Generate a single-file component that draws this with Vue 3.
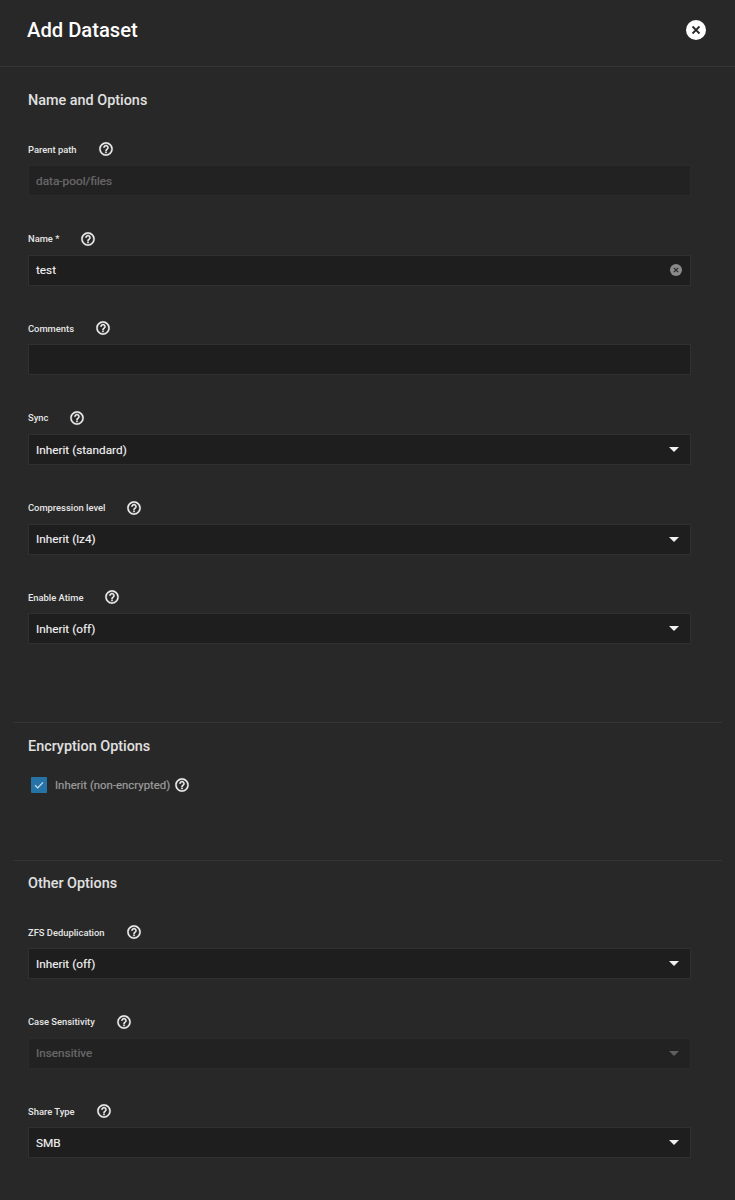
<script setup>
const first = [
  { label: 'Parent path', value: 'data-pool/files', disabled: true, kind: 'text' },
  { label: 'Name *', value: 'test', kind: 'clear' },
  { label: 'Comments', value: '', kind: 'text' },
  { label: 'Sync', value: 'Inherit (standard)', kind: 'select' },
  { label: 'Compression level', value: 'Inherit (lz4)', kind: 'select' },
  { label: 'Enable Atime', value: 'Inherit (off)', kind: 'select' },
]
const other = [
  { label: 'ZFS Deduplication', value: 'Inherit (off)', kind: 'select' },
  { label: 'Case Sensitivity', value: 'Insensitive', disabled: true, kind: 'select' },
  { label: 'Share Type', value: 'SMB', kind: 'select' },
]
const helpPath = 'M11 18h2v-2h-2v2zm1-16C6.48 2 2 6.48 2 12s4.48 10 10 10 10-4.48 10-10S17.52 2 12 2zm0 18c-4.41 0-8-3.59-8-8s3.59-8 8-8 8 3.59 8 8-3.59 8-8 8zm0-14c-2.21 0-4 1.79-4 4h2c0-1.1.9-2 2-2s2 .9 2 2c0 2-3 1.75-3 5h2c0-2.25 3-2.5 3-5 0-2.21-1.79-4-4-4z'
</script>

<template>
  <div class="page">
    <header class="top">
      <h1>Add Dataset</h1>
      <svg class="close" viewBox="0 0 20 20" width="20" height="20">
        <circle cx="10" cy="10" r="10" fill="#fff" />
        <path d="M6.5 6.5l7 7M13.5 6.5l-7 7" stroke="#2a2a2a" stroke-width="1.8" fill="none" />
      </svg>
    </header>

    <section class="sec sec-first">
      <h2>Name and Options</h2>
      <div class="fields">
        <div v-for="f in first" :key="f.label" class="field">
          <div class="label">
            <span>{{ f.label }}</span>
            <svg class="help" viewBox="0 0 24 24" width="16" height="16"><path :d="helpPath" /></svg>
          </div>
          <div class="box" :class="{ disabled: f.disabled }">
            <span class="val">{{ f.value }}</span>
            <svg v-if="f.kind === 'clear'" class="clear" viewBox="0 0 12 12" width="12" height="12">
              <circle cx="6" cy="6" r="6" fill="#8a8a8a" />
              <path d="M3.8 3.8l4.4 4.4M8.2 3.8L3.8 8.2" stroke="#2a2a2a" stroke-width="1.2" fill="none" />
            </svg>
            <span v-if="f.kind === 'select'" class="arrow"></span>
          </div>
        </div>
      </div>
    </section>

    <section class="sec sec-enc">
      <h2>Encryption Options</h2>
      <div class="check">
        <span class="cb">
          <svg viewBox="0 0 16 16" width="16" height="16"><path d="M4 8.3l2.7 2.6L12 5.4" stroke="#cfe0ec" stroke-width="1.2" fill="none" /></svg>
        </span>
        <span class="cb-label">Inherit (non-encrypted)</span>
        <svg class="help" viewBox="0 0 24 24" width="16" height="16"><path :d="helpPath" /></svg>
      </div>
    </section>

    <section class="sec sec-other">
      <h2>Other Options</h2>
      <div class="fields">
        <div v-for="f in other" :key="f.label" class="field">
          <div class="label">
            <span>{{ f.label }}</span>
            <svg class="help" viewBox="0 0 24 24" width="16" height="16"><path :d="helpPath" /></svg>
          </div>
          <div class="box" :class="{ disabled: f.disabled }">
            <span class="val">{{ f.value }}</span>
            <span class="arrow"></span>
          </div>
        </div>
      </div>
    </section>
  </div>
</template>

<style>
html, body { margin: 0; background: #282828; }
</style>

<style scoped>
.page {
  width: 735px;
  height: 1200px;
  overflow: hidden;
  background: #282828;
  font-family: Roboto, "Liberation Sans", sans-serif;
  color: #e6e6e6;
}
.top {
  height: 67px;
  box-sizing: border-box;
  display: flex;
  align-items: center;
  justify-content: space-between;
  padding: 0 29px 6px 27px;
  border-bottom: 1px solid #353535;
}
h1 {
  margin: 0;
  font-size: 20.2px;
  font-weight: 500;
  line-height: 28px;
  color: #fff;
}
.close { display: block; }
.help { flex: none; fill: #f2f2f2; stroke: #f2f2f2; stroke-width: 0.5; }
.sec { margin: 0 13px; padding: 0 15px; }
h2 {
  margin: 0;
  font-size: 14.4px;
  font-weight: 500;
  line-height: 20px;
  color: #e0e0e0;
}
.sec-first { height: 655px; padding-top: 24px; box-sizing: border-box; }
.sec-first .fields { margin-top: 31px; }
.sec-enc {
  height: 138px;
  box-sizing: border-box;
  border-top: 1px solid #353535;
  padding-top: 14px;
}
.sec-other {
  border-top: 1px solid #353535;
  padding-top: 13px;
}
.sec-other .fields { margin-top: 31px; }
.field { height: 89.65px; }
.label {
  display: flex;
  align-items: center;
  gap: 21px;
  height: 14px;
  font-size: 9.4px;
  font-weight: 500;
  color: #e6e6e6;
}
.box {
  margin-top: 9.2px;
  height: 31px;
  box-sizing: border-box;
  width: 663px;
  background: #1e1e1e;
  border: 1px solid #303030;
  display: flex;
  align-items: center;
  justify-content: space-between;
  padding: 0 9px 0 7px;
  font-size: 11.8px;
  color: #f0f0f0;
}
.val { text-shadow: 0 0 0.7px rgba(240, 240, 240, 0.4); }
.box.disabled { background: #222222; border-color: #2b2b2b; color: #666666; }
.disabled .val { text-shadow: 0 0 0.7px rgba(102, 102, 102, 0.8); }
.clear { margin-right: -1px; }
.arrow {
  width: 0;
  height: 0;
  margin-right: 2px;
  border-left: 5px solid transparent;
  border-right: 5px solid transparent;
  border-top: 5px solid #f0f0f0;
}
.disabled .arrow { border-top-color: #5f5f5f; }
.check {
  display: flex;
  align-items: center;
  margin-top: 19px;
  margin-left: 3px;
  height: 18px;
}
.cb {
  width: 16px;
  height: 16px;
  background: #2673a8;
  display: block;
  border-radius: 1px;
}
.cb svg { display: block; }
.cb-label {
  margin-left: 8px;
  margin-right: 4px;
  font-size: 11.4px;
  color: #9a9a9a;
  text-shadow: 0 0 0.7px rgba(154, 154, 154, 0.5);
}
</style>
